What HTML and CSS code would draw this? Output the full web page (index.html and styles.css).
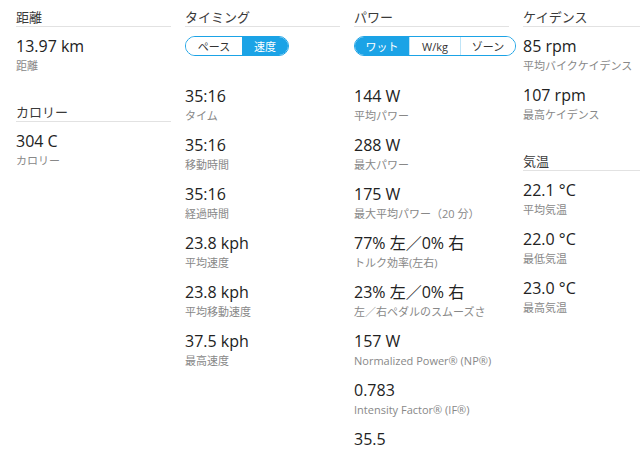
FILE: index.html
```html
<!DOCTYPE html>
<html lang="ja">
<head>
<meta charset="utf-8">
<link rel="stylesheet" href="styles.css">
</head>
<body>
<div class="grid">
  <div class="col">
    <section class="sec">
      <h3 class="title">距離</h3>
      <div class="item"><div class="val">13.97 km</div><div class="lbl">距離</div></div>
    </section>
    <section class="sec">
      <h3 class="title">カロリー</h3>
      <div class="item"><div class="val">304 C</div><div class="lbl">カロリー</div></div>
    </section>
  </div>
  <div class="col">
    <section class="sec">
      <h3 class="title">タイミング</h3>
      <div class="toggle">
        <span class="seg w57">ペース</span><span class="seg on w47">速度</span>
      </div>
      <div class="items-after-toggle">
        <div class="item"><div class="val">35:16</div><div class="lbl">タイム</div></div>
        <div class="item"><div class="val">35:16</div><div class="lbl">移動時間</div></div>
        <div class="item"><div class="val">35:16</div><div class="lbl">経過時間</div></div>
        <div class="item"><div class="val">23.8 kph</div><div class="lbl">平均速度</div></div>
        <div class="item"><div class="val">23.8 kph</div><div class="lbl">平均移動速度</div></div>
        <div class="item"><div class="val">37.5 kph</div><div class="lbl">最高速度</div></div>
      </div>
    </section>
  </div>
  <div class="col">
    <section class="sec">
      <h3 class="title">パワー</h3>
      <div class="toggle">
        <span class="seg on w55">ワット</span><span class="seg div w51">W/kg</span><span class="seg div w56">ゾーン</span>
      </div>
      <div class="items-after-toggle">
        <div class="item"><div class="val">144 W</div><div class="lbl">平均パワー</div></div>
        <div class="item"><div class="val">288 W</div><div class="lbl">最大パワー</div></div>
        <div class="item"><div class="val">175 W</div><div class="lbl">最大平均パワー（20 分）</div></div>
        <div class="item"><div class="val">77% 左／0% 右</div><div class="lbl">トルク効率(左右)</div></div>
        <div class="item"><div class="val">23% 左／0% 右</div><div class="lbl">左／右ペダルのスムーズさ</div></div>
        <div class="item"><div class="val">157 W</div><div class="lbl">Normalized Power® (NP®)</div></div>
        <div class="item"><div class="val">0.783</div><div class="lbl">Intensity Factor® (IF®)</div></div>
        <div class="item"><div class="val">35.5</div></div>
      </div>
    </section>
  </div>
  <div class="col">
    <section class="sec">
      <h3 class="title">ケイデンス</h3>
      <div class="item"><div class="val">85 rpm</div><div class="lbl">平均バイクケイデンス</div></div>
      <div class="item"><div class="val">107 rpm</div><div class="lbl">最高ケイデンス</div></div>
    </section>
    <section class="sec">
      <h3 class="title">気温</h3>
      <div class="item"><div class="val">22.1 °C</div><div class="lbl">平均気温</div></div>
      <div class="item"><div class="val">22.0 °C</div><div class="lbl">最低気温</div></div>
      <div class="item"><div class="val">23.0 °C</div><div class="lbl">最高気温</div></div>
    </section>
  </div>
</div>
</body>
</html>
```

FILE: styles.css
```css
html, body {
  margin: 0;
  padding: 0;
  background: #fff;
  overflow: hidden;
}
body {
  font-family: "Open Sans", "Noto Sans CJK JP", sans-serif;
  color: #222;
}
.grid {
  display: grid;
  grid-template-columns: 155px 155px 155px 1fr;
  column-gap: 14px;
  padding: 8px 0 0 16px;
  width: 640px;
  box-sizing: border-box;
}
.col {
  display: flex;
  flex-direction: column;
  gap: 28px;
  min-width: 0;
}
.sec {
  display: flex;
  flex-direction: column;
}
.title {
  margin: 0;
  font-size: 13px;
  font-weight: normal;
  line-height: 18px;
  color: #3a3a3a;
  border-bottom: 1px solid #e2e2e2;
}
.item {
  display: flex;
  flex-direction: column;
  margin-top: 8px;
}
.item + .item {
  margin-top: 9px;
}
.val {
  font-size: 16px;
  line-height: 22px;
  color: #222;
  white-space: nowrap;
}
.lbl {
  font-size: 11px;
  line-height: 18px;
  color: #888;
  white-space: nowrap;
}
.toggle {
  display: flex;
  align-self: flex-start;
  margin-top: 9px;
  height: 18px;
  border: 1px solid #1ba3e6;
  border-radius: 10px;
  overflow: hidden;
}
.seg {
  display: flex;
  align-items: center;
  justify-content: center;
  font-size: 11px;
  color: #333;
  background: #fff;
  box-sizing: border-box;
}
.seg.on {
  background: #1ba3e6;
  color: #fff;
}
.seg.div {
  border-left: 1px solid #bfe4f7;
}
.w57 { width: 56px; }
.w47 { width: 46px; }
.w55 { width: 54px; }
.w51 { width: 51px; }
.w56 { width: 55px; }
.items-after-toggle {
  display: flex;
  flex-direction: column;
  margin-top: 21px;
}
```
